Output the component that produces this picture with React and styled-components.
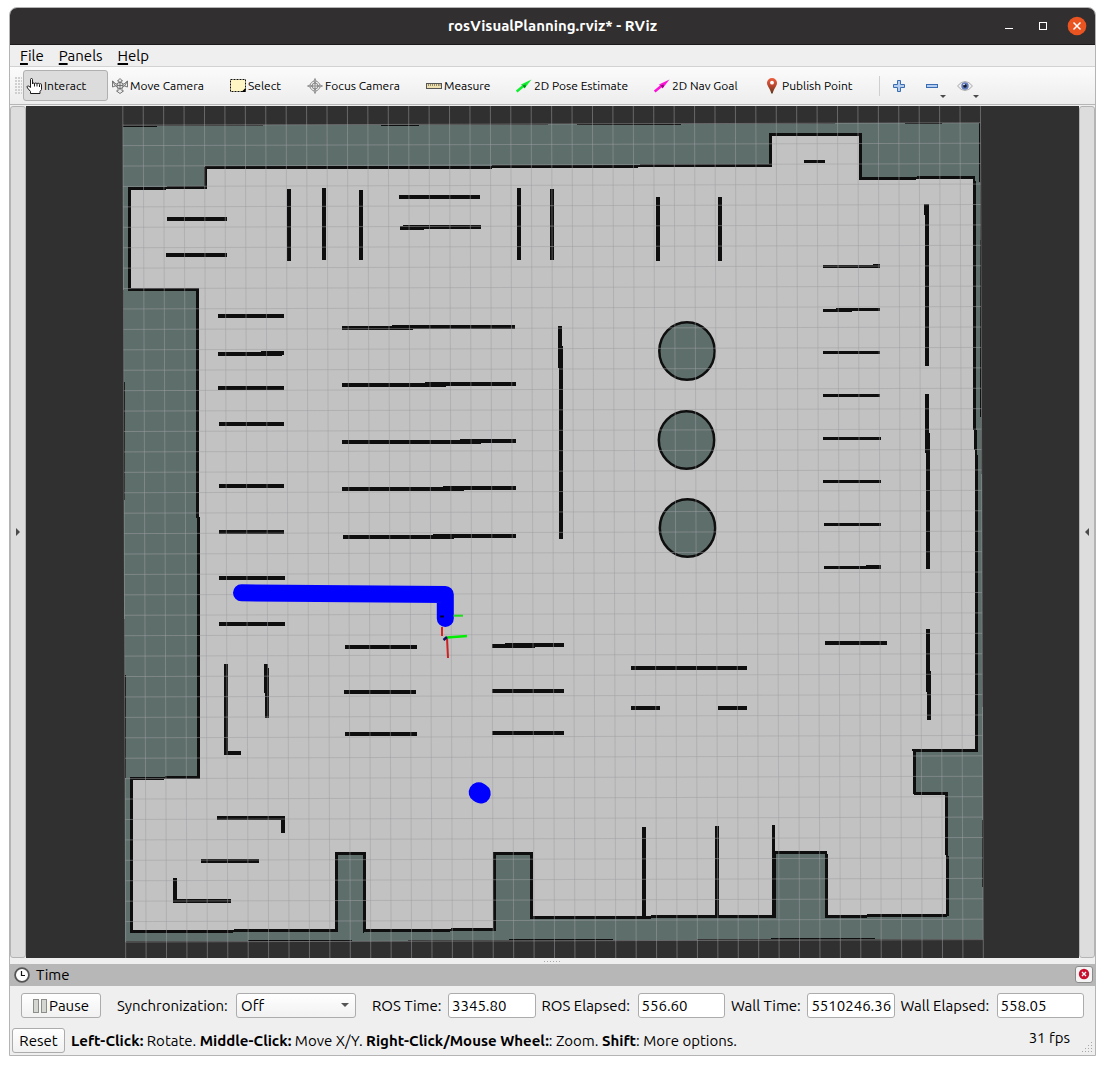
import React, { useEffect, useRef } from "react";
import styled, { createGlobalStyle, css } from "styled-components";

const GlobalStyle = createGlobalStyle`
  * { box-sizing: border-box; }
  body {
    margin: 0;
    background: #ffffff;
    color: #000000;
    font-family: Ubuntu, "Open Sans", "Noto Sans", sans-serif;
    font-size: 15px;
    line-height: 20px;
  }
  button, input, select { font: inherit; color: inherit; margin: 0; }
`;

const Page = styled.div`
  padding: 7px 9px 9px;
`;

const Window = styled.main`
  display: flex;
  flex-direction: column;
  border: 1px solid #b4b4b4;
  border-radius: 8px 8px 0 0;
  background: #efefef;
  overflow: hidden;
`;

/* Title bar */
const TitleBar = styled.header`
  display: grid;
  grid-template-columns: 1fr auto 1fr;
  align-items: center;
  height: 37px;
  background: #322f30;
  border-bottom: 1px solid #1c1a1b;
  color: #ffffff;
`;

const Title = styled.h1`
  grid-column: 2;
  margin: 0;
  font-size: 15px;
  font-weight: 700;
`;

const WindowControls = styled.div`
  display: flex;
  justify-self: end;
  gap: 14px;
  padding-right: 8px;
`;

const WindowButton = styled.button`
  display: grid;
  place-items: center;
  width: 20px;
  height: 20px;
  padding: 0;
  border: 0;
  background: none;
  svg { display: block; }
`;

/* Menu bar */
const MenuBar = styled.nav`
  display: flex;
  align-items: center;
  gap: 15px;
  height: 22px;
  padding-left: 10px;
  border-bottom: 1px solid #d2d2d2;
`;

const MenuButton = styled.button`
  padding: 0;
  border: 0;
  background: none;
  &::first-letter {
    text-decoration: underline;
    text-decoration-thickness: 2px;
    text-underline-offset: 2px;
  }
`;

/* Toolbar */
const Toolbar = styled.div`
  display: flex;
  align-items: center;
  gap: 1px;
  height: 38px;
  padding-left: 5px;
  background: linear-gradient(#fbfbfb, #ededed);
  border-bottom: 1px solid #b6b6b6;
`;

const Grip = styled.span`
  flex: none;
  width: 7px;
  height: 17px;
  background-image: radial-gradient(circle at 1px 1px, #cfcfcf 1px, transparent 1px);
  background-size: 3px 3px;
`;

const ToolButton = styled.button`
  display: flex;
  align-items: center;
  gap: 2px;
  flex: 0 1 ${(p) => p.$width}px;
  height: 31px;
  padding: 0 0 0 2px;
  border: 1px solid transparent;
  border-radius: 3px;
  background: none;
  font-size: 12px;
  white-space: nowrap;
  svg { flex: none; }
  ${(p) =>
    p.$pressed &&
    css`
      border-color: #b0b0b0;
      background: #dcdcdc;
    `}
`;

const Separator = styled.span`
  width: 1px;
  height: 20px;
  margin: 0 10px 0 5px;
  background: #cfcfcf;
`;

const IconButton = styled.button`
  position: relative;
  display: grid;
  place-items: center;
  width: 32px;
  height: 31px;
  padding: 0 16px 0 0;
  border: 0;
  background: none;
`;

const DropMark = styled.span`
  position: absolute;
  right: 10px;
  bottom: 3px;
  border: 3px solid transparent;
  border-top-color: #4a4a4a;
  border-bottom: 0;
`;

/* Viewport */
const Workspace = styled.section`
  display: flex;
  padding-top: 1px;
`;

const SideHandle = styled.button`
  flex: 0 0 16px;
  display: grid;
  place-items: center;
  padding: 0;
  border: 1px solid #b4b4b4;
  border-radius: 3px;
  background: #dddddd;
`;

const View = styled.div`
  flex: 1;
  min-width: 0;
  background: #303030;
  svg { display: block; width: 100%; height: auto; }
`;

const Splitter = styled.div`
  display: grid;
  place-items: center;
  height: 6px;
  &::after {
    content: "";
    width: 17px;
    height: 1px;
    background: repeating-linear-gradient(90deg, #a8a8a8 0 1px, transparent 1px 3px);
  }
`;

/* Time panel */
const PanelHeader = styled.div`
  display: flex;
  align-items: center;
  gap: 6px;
  height: 22px;
  padding: 0 2px 0 4px;
  background: #b7b7b7;
`;

const PanelTitle = styled.h2`
  flex: 1;
  margin: 0;
  font-size: 15px;
  font-weight: 400;
`;

const PanelClose = styled.button`
  display: grid;
  place-items: center;
  width: 18px;
  height: 17px;
  margin-bottom: 2px;
  padding: 0;
  border: 1px solid #8a8a8a;
  border-radius: 3px;
  background: #f4f4f4;
`;

const Controls = styled.form`
  display: flex;
  align-items: center;
  gap: 6px;
  padding: 7px 11px 8px 11px;
`;

const PushButton = styled.button`
  display: flex;
  align-items: center;
  justify-content: center;
  gap: 2px;
  flex: none;
  width: ${(p) => p.$width}px;
  height: 25px;
  padding: 0;
  border: 1px solid #acacac;
  border-radius: 3px;
  background: linear-gradient(#ffffff, #f1f1f1);
`;

const Field = styled.div`
  display: flex;
  align-items: center;
  flex: ${(p) => (p.$fixed ? "none" : "1 1 auto")};
  margin: ${(p) => (p.$fixed ? "0 10px" : "0")};
  min-width: 0;
`;

const Label = styled.label`
  flex: 0 0 ${(p) => p.$width}px;
  white-space: nowrap;
`;

const TextInput = styled.input`
  flex: 1;
  width: 87px;
  min-width: 0;
  height: 25px;
  padding: 0 3px;
  border: 1px solid #acacac;
  border-radius: 3px;
  background: #ffffff;
`;

const SelectWrap = styled.span`
  position: relative;
  display: flex;
`;

const SelectBox = styled.select`
  appearance: none;
  width: 120px;
  height: 25px;
  padding: 0 20px 0 4px;
  border: 1px solid #acacac;
  border-radius: 3px;
  background: linear-gradient(#ffffff, #f1f1f1);
`;

const SelectMark = styled.span`
  position: absolute;
  right: 7px;
  top: 10px;
  border: 4px solid transparent;
  border-top-color: #555555;
  border-bottom: 0;
  pointer-events: none;
`;

const StatusBar = styled.footer`
  display: flex;
  align-items: center;
  gap: 6px;
  height: 29px;
  padding: 0 1px 0 2px;
`;

const StatusText = styled.p`
  flex: 1;
  margin: 0;
  white-space: nowrap;
`;

const Fps = styled.output`
  align-self: flex-start;
  margin: 2px 6px 0 0;
`;

const SizeGrip = styled.svg`
  align-self: flex-end;
  margin-bottom: 2px;
`;

/* Icons */
const HandIcon = () => (
  <svg width="16" height="16" viewBox="0 0 16 16">
    <path
      d="M4.500 9V1.500q0-1 1-1t1 1V6q0-1 1-1t1 1q0-1 1.200-1t1.300 1q0-.8 1.200-.8T13.500 6.300q0-.6 1-.6t1 1V11.500l-1.500 2v2H4.500v-2l-3-3.500q-1-1.500 0-2t3 1.500z"
      fill="#fff" stroke="#1a1a1a"
    />
    <path d="M8.500 6v2.500M11 6v2.500M13.500 6.500V9" stroke="#1a1a1a" fill="none" />
  </svg>
);

const MoveIcon = () => (
  <svg width="16" height="16" viewBox="0 0 16 16" fill="#ececec" stroke="#6a6a6a" strokeWidth="0.900">
    <path d="M8 .5l2.500 2.500H9v3h3L15.500 3v6L12.500 8 10 9.500v3.500h1.500L8 15.500 4.500 13H6V9.500L3.500 8 .5 9V3L4 6h3V3H5.500z" />
    <circle cx="8" cy="7.500" r="3.200" fill="#e4e4e4" />
    <path d="M5 7.500h6M8 4v8M.5 3l3 5M15.500 3l-3 5" fill="none" />
  </svg>
);

const SelectIcon = () => (
  <svg width="16" height="16" viewBox="0 0 16 16">
    <rect x=".5" y="1.500" width="15" height="12" fill="#fff6c4" stroke="#111" strokeDasharray="2 1" />
    <path d="M15.500 10v4h-4z" fill="#000" />
  </svg>
);

const FocusIcon = () => (
  <svg width="16" height="16" viewBox="0 0 16 16" fill="#dedede" stroke="#8a8a8a" strokeWidth="0.900">
    <circle cx="8" cy="8" r="5" fill="#eeeeee" />
    <circle cx="8" cy="8" r="3" />
    <path d="M8 .5l1 2.500-1 3-1-3zM8 15.500l1-2.500-1-3-1 3zM.5 8L3 7l3 1-3 1zM15.500 8L13 7l-3 1 3 1z" fill="#c4c4c4" />
    <path d="M8 5v6M5 8h6" />
  </svg>
);

const RulerIcon = () => (
  <svg width="16" height="16" viewBox="0 0 16 16">
    <rect x=".5" y="5.500" width="15" height="5" fill="#eedfae" stroke="#555" />
    <path d="M2.500 6v2M4.500 6v2M6.500 6v2M8.500 6v2M10.500 6v2M12.500 6v2M14 6v2" stroke="#8a8266" strokeWidth="0.900" />
  </svg>
);

const ArrowIcon = ({ color, shade }) => (
  <svg width="16" height="16" viewBox="0 0 16 16">
    <path d="M.7 13.500L7 8.300" stroke={color} strokeWidth="2.600" />
    <path d="M15.500 1.500L5 6.500 8.500 10.500z" fill={color} />
    <path d="M6.500 7.500l3-1 .5 2-1.500 1.500z" fill={shade} />
  </svg>
);

const PinIcon = () => (
  <svg width="16" height="16" viewBox="0 0 16 16">
    <defs>
      <linearGradient id="pin" x2="0" y2="1">
        <stop offset="0" stopColor="#ee6040" />
        <stop offset=".5" stopColor="#b8452c" />
        <stop offset="1" stopColor="#5c3a1e" />
      </linearGradient>
    </defs>
    <path d="M8 0a5 5 0 0 1 5 5c0 3-3.500 6-4.300 10.500H7.300C6.500 11 3 8 3 5a5 5 0 0 1 5-5z" fill="url(#pin)" />
    <circle cx="8" cy="4.700" r="1.900" fill="#fff" />
  </svg>
);

const PlusIcon = () => (
  <svg width="16" height="16" viewBox="0 0 16 16">
    <path d="M6.500 2.500h3v4h4v3h-4v4h-3v-4h-4v-3h4z" fill="#b4cdee" stroke="#3a6cb4" />
  </svg>
);

const MinusIcon = () => (
  <svg width="16" height="16" viewBox="0 0 16 16">
    <rect x="2.500" y="6.500" width="11" height="3" fill="#b4cdee" stroke="#3a6cb4" />
  </svg>
);

const EyeIcon = () => (
  <svg width="16" height="16" viewBox="0 0 16 16">
    <path d="M.5 8Q4 3.500 8 3.500T15.500 8Q12 12.500 8 12.500T.5 8z" fill="#eeeeee" stroke="#aaaaaa" />
    <circle cx="8" cy="8" r="3.700" fill="#6079b8" />
    <circle cx="8" cy="8" r="1.800" fill="#14182c" />
    <circle cx="7" cy="6.500" r=".8" fill="#ffffff" />
  </svg>
);

const ClockIcon = () => (
  <svg width="16" height="16" viewBox="0 0 16 16">
    <circle cx="8" cy="8" r="6.900" fill="#fff" stroke="#555" strokeWidth="1.800" />
    <path d="M7.500 4v4.500H11" stroke="#111" strokeWidth="1.200" fill="none" />
  </svg>
);

const PauseIcon = () => (
  <svg width="14" height="14" viewBox="0 0 14 14" fill="#d3d6d1" stroke="#8c8e8a">
    <rect x=".5" y=".5" width="5" height="13" />
    <rect x="8.500" y=".5" width="5" height="13" />
  </svg>
);

/* Map data */
const FREE_SPACE =
  "M205.500 168 L420 167.500 L640 166 L770.500 165.500 V134.500 H860.500 V178.500 L974 177.500 L975 430 L976 450 L977 750.500 H914 L915 793.500 H946.500 L947.500 915 L827 916.500 L826 852.500 H774 V916.500 L531.500 917.500 V853.500 H494.500 V929.500 L364.500 931 V853.500 H336.500 V930.500 L131.500 931.500 V778.500 L198.500 777.500 V520 L197.500 515 V290 L129.500 289.500 V188.500 L205.500 187.500 Z";

// [x1, y1, x2, y2, thickness]
const WALLS = [
  [167, 219, 227, 219, 4], [166, 255, 227, 255, 4],
  [289, 189, 289, 261, 4], [324, 188, 324, 260, 4], [361, 190, 361, 260, 4],
  [399, 197, 480, 197, 4], [400, 228, 424, 228, 4], [403, 227, 481, 227, 4],
  [519, 188, 519, 260, 4], [552, 189, 552, 260, 4],
  [658, 197, 658, 261, 4], [720, 197, 720, 261, 4],
  [804, 161.5, 825, 161.5, 3],
  [218, 316, 284, 316, 4], [218, 354, 282, 354, 4], [261, 353, 284, 353, 4],
  [218, 388, 284, 388, 4], [219, 424, 284, 424, 4], [219, 486, 284, 486, 4],
  [219, 532, 284, 532, 4], [219, 578, 285, 578, 4], [219, 624, 285, 624, 4],
  [342, 328, 413, 328, 4], [392, 327, 515, 327, 4],
  [342, 385, 446, 385, 4], [425, 384, 516, 384, 4],
  [342, 442, 481, 442, 4], [460, 441, 516, 441, 4],
  [342, 489, 464, 489, 4], [443, 488, 516, 488, 4],
  [343, 537, 454, 537, 4], [433, 536, 516, 536, 4],
  [560, 326, 560, 368, 4], [561, 346, 561, 539, 4],
  [345, 647, 417, 647, 4], [344, 692, 416, 692, 4], [345, 734, 417, 734, 4],
  [492, 646, 535, 646, 4], [505, 645, 564, 645, 4],
  [492, 691, 564, 691, 4], [492, 733, 564, 733, 4],
  [226, 664, 226, 755, 4], [225, 753, 241, 753, 4],
  [266, 664, 266, 693, 4], [267, 668, 267, 718, 4],
  [217, 818, 285, 818, 4], [283, 817, 283, 833, 4],
  [201, 861, 259, 861, 4], [175, 878, 175, 903, 4], [173, 901, 231, 901, 4],
  [823, 266.5, 880, 266.5, 3], [873, 265.5, 880, 265.5, 3],
  [823, 310.5, 852, 310.5, 3], [836, 309.5, 880, 309.5, 3],
  [823, 352.5, 880, 352.5, 3], [823, 395.5, 880, 395.5, 3],
  [823, 438.5, 881, 438.5, 3], [823, 481.5, 881, 481.5, 3],
  [824, 524.5, 881, 524.5, 3], [824, 567.5, 881, 567.5, 3], [866, 566.5, 881, 566.5, 3],
  [825, 643, 887, 643, 4],
  [926, 204, 926, 215, 4], [927, 204, 927, 366, 4],
  [927, 394, 927, 453, 4], [928, 433, 928, 569, 4],
  [928, 629, 928, 692, 4], [929, 671, 929, 720, 4],
  [631, 668, 747, 668, 4], [631, 708, 660, 708, 4], [718, 708, 747, 708, 4],
  [644, 827, 644, 916, 4], [717, 826, 717, 916, 4], [773.5, 825, 773.5, 917, 3],
];

const MAP_EDGES = [
  [123, 126.5, 157, 126.5, 1], [381, 125.5, 419, 125.5, 1], [577, 124.5, 681, 124.5, 1],
  [905, 123.5, 942, 123.5, 1], [979.5, 123, 979.5, 182, 1], [124.5, 382, 124.5, 500, 1],
  [248, 940.5, 352, 940.5, 1], [509, 939.5, 613, 939.5, 1], [771, 938.5, 875, 938.5, 1],
  [125.5, 675, 125.5, 778, 1], [980.5, 240, 980.5, 417, 1], [982.5, 820, 982.5, 887, 1],
];

const PILLARS = [
  [687, 351], [686.5, 440], [687.5, 528],
];

const CELL = 20.42;
const COLUMNS = Array.from({ length: 43 }, (_, i) => 122.8 + i * CELL);
const ROWS = Array.from({ length: 41 }, (_, i) => 125.2 + i * CELL);

const Segments = ({ items }) =>
  items.map(([x1, y1, x2, y2, w]) => (
    <line key={[x1, y1, x2, y2].join()} x1={x1} y1={y1} x2={x2} y2={y2} strokeWidth={w} />
  ));

const MapView = () => (
  <svg viewBox="26 106 1053 852" role="img" aria-label="Occupancy grid map with planned path">
    <g shapeRendering="crispEdges">
      <path d="M123 126 L980 123 L983.500 938.500 L125.500 941.500 Z" fill="#5e6e6b" />
      <path d={FREE_SPACE} fill="#c2c2c2" stroke="#0e0e0e" strokeWidth="3" />
      <g stroke="#0e0e0e">
        <Segments items={WALLS} />
        <Segments items={MAP_EDGES} />
      </g>
    </g>
    <g fill="#5e6e6b" stroke="#0e0e0e" strokeWidth="2.500">
      {PILLARS.map(([cx, cy]) => (
        <ellipse key={cy} cx={cx} cy={cy} rx="27.700" ry="28.800" />
      ))}
    </g>
    <g stroke="#a0a0a4" strokeOpacity=".5">
      {COLUMNS.map((x) => (
        <line key={x} x1={x} y1="106" x2={x + 2.9} y2="958" />
      ))}
      {ROWS.map((y, i) => (
        <line key={y} x1={122.8 + i * 0.07} y1={y} x2={980.4 + i * 0.07} y2={y - 2.4} />
      ))}
    </g>
    <path d="M241.500 592.800 L445.300 594.500 V618.500" fill="none" stroke="#0000ff" strokeWidth="17" strokeLinecap="round" strokeLinejoin="round" />
    <path d="M478.700 792.300 L480.700 793.500" stroke="#0000ff" strokeWidth="20" strokeLinecap="round" />
    <path d="M440 616.500h4" stroke="#000030" strokeWidth="2" />
    <path d="M453.500 615.700h9.500" stroke="#20dd20" strokeWidth="2" />
    <path d="M442 627v9" stroke="#dd2020" strokeWidth="2" />
    <path d="M447 637.500L448 658" stroke="#cc2222" strokeWidth="2" />
    <path d="M447 637.500L467 636" stroke="#00ee00" strokeWidth="2.500" />
    <path d="M443.500 640L447 637" stroke="#101060" strokeWidth="2.500" />
  </svg>
);

const TOOLS = [
  { name: "Interact", width: 85, icon: <HandIcon />, pressed: true },
  { name: "Move Camera", width: 117, icon: <MoveIcon /> },
  { name: "Select", width: 76, icon: <SelectIcon /> },
  { name: "Focus Camera", width: 118, icon: <FocusIcon /> },
  { name: "Measure", width: 89, icon: <RulerIcon /> },
  { name: "2D Pose Estimate", width: 137, icon: <ArrowIcon color="#10ee30" shade="#0a8a20" /> },
  { name: "2D Nav Goal", width: 109, icon: <ArrowIcon color="#ff10d8" shade="#90087c" /> },
  { name: "Publish Point", width: 112, icon: <PinIcon /> },
];

const CLOCKS = [
  { id: "ros-time", name: "ROS Time:", value: "3345.80", width: 76 },
  { id: "ros-elapsed", name: "ROS Elapsed:", value: "556.60", width: 96 },
  { id: "wall-time", name: "Wall Time:", value: "1675510246.36", width: 76 },
  { id: "wall-elapsed", name: "Wall Elapsed:", value: "558.05", width: 96 },
];

function ClockField({ id, name, value, width }) {
  const ref = useRef(null);
  // Long values stay scrolled to their last digits.
  useEffect(() => {
    ref.current.scrollLeft = ref.current.scrollWidth;
  }, [value]);
  return (
    <Field>
      <Label htmlFor={id} $width={width}>{name}</Label>
      <TextInput id={id} ref={ref} value={value} readOnly />
    </Field>
  );
}

export default function App() {
  return (
    <Page>
      <GlobalStyle />
      <Window>
        <TitleBar>
          <Title>rosVisualPlanning.rviz* - RViz</Title>
          <WindowControls>
            <WindowButton aria-label="Minimize">
              <svg width="10" height="10"><path d="M1 7.500h8" stroke="#fff" /></svg>
            </WindowButton>
            <WindowButton aria-label="Maximize">
              <svg width="10" height="10"><rect x="1.500" y="1.500" width="7" height="7" fill="none" stroke="#fff" /></svg>
            </WindowButton>
            <WindowButton aria-label="Close">
              <svg width="20" height="20">
                <circle cx="10" cy="10" r="9.300" fill="#e95420" />
                <path d="M6.500 6.500l7 7M13.500 6.500l-7 7" stroke="#fff" strokeWidth="1.500" />
              </svg>
            </WindowButton>
          </WindowControls>
        </TitleBar>

        <MenuBar>
          <MenuButton>File</MenuButton>
          <MenuButton>Panels</MenuButton>
          <MenuButton>Help</MenuButton>
        </MenuBar>

        <Toolbar>
          <Grip />
          {TOOLS.map((tool) => (
            <ToolButton key={tool.name} $width={tool.width} $pressed={tool.pressed}>
              {tool.icon}
              {tool.name}
            </ToolButton>
          ))}
          <Separator />
          <IconButton aria-label="Add tool"><PlusIcon /></IconButton>
          <IconButton aria-label="Remove tool"><MinusIcon /><DropMark /></IconButton>
          <IconButton aria-label="Toolbar visibility"><EyeIcon /><DropMark /></IconButton>
        </Toolbar>

        <Workspace>
          <SideHandle aria-label="Show left panels">
            <svg width="6" height="8"><path d="M1 0v8l4-4z" fill="#4a4a4a" /></svg>
          </SideHandle>
          <View><MapView /></View>
          <SideHandle aria-label="Show right panels">
            <svg width="6" height="8"><path d="M5 0v8L1 4z" fill="#4a4a4a" /></svg>
          </SideHandle>
        </Workspace>
        <Splitter />

        <PanelHeader>
          <ClockIcon />
          <PanelTitle>Time</PanelTitle>
          <PanelClose aria-label="Close Time panel">
            <svg width="12" height="12">
              <circle cx="6" cy="6" r="5.200" fill="#c8102e" />
              <path d="M4 4l4 4M8 4l-4 4" stroke="#fff" strokeWidth="1.300" />
            </svg>
          </PanelClose>
        </PanelHeader>

        <Controls>
          <PushButton type="button" $width={80}><PauseIcon />Pause</PushButton>
          <Field $fixed>
            <Label htmlFor="sync" $width={119}>Synchronization:</Label>
            <SelectWrap>
              <SelectBox id="sync" defaultValue="Off">
                <option>Off</option>
              </SelectBox>
              <SelectMark />
            </SelectWrap>
          </Field>
          {CLOCKS.map((clock) => (
            <ClockField key={clock.id} {...clock} />
          ))}
        </Controls>

        <StatusBar>
          <PushButton type="button" $width={53}>Reset</PushButton>
          <StatusText>
            <b>Left-Click:</b> Rotate. <b>Middle-Click:</b> Move X/Y. <b>Right-Click/Mouse Wheel:</b>: Zoom. <b>Shift</b>: More options.
          </StatusText>
          <Fps>31 fps</Fps>
          <SizeGrip width="12" height="12" stroke="#a8a8a8" strokeDasharray="1 2">
            <path d="M9 1.500h3M6 4.500h6M3 7.500h9M0 10.500h12" />
          </SizeGrip>
        </StatusBar>
      </Window>
    </Page>
  );
}
